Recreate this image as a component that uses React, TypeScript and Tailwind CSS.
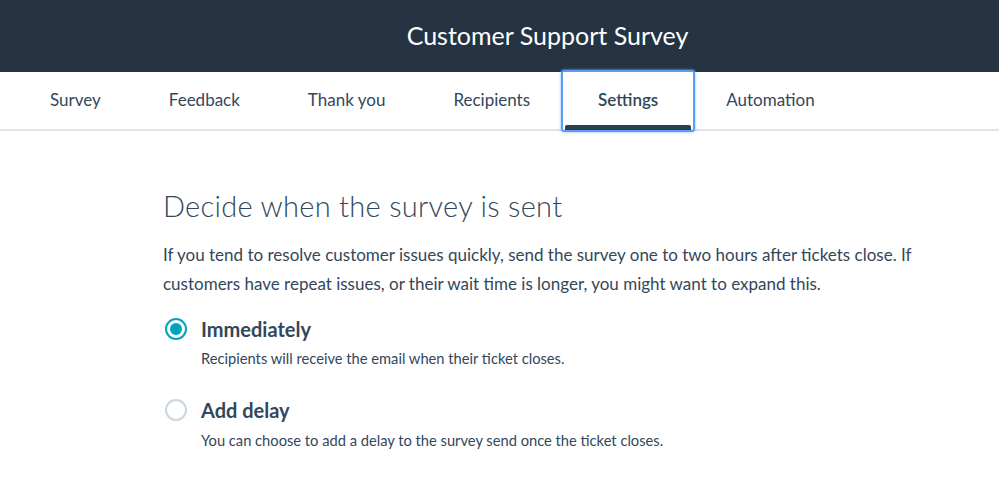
const tabs = ["Survey", "Feedback", "Thank you", "Recipients", "Settings", "Automation"];

function Radio({ checked }: { checked: boolean }) {
  return (
    <span
      className={
        "ml-[2px] mt-[3px] flex h-[22px] w-[22px] shrink-0 items-center justify-center rounded-full border-2 bg-white " +
        (checked ? "border-[#00a4bd]" : "border-[#cbd6e2]")
      }
    >
      {checked && <span className="h-[12px] w-[12px] rounded-full bg-[#00a4bd]" />}
    </span>
  );
}

export default function App() {
  return (
    <div className="h-[479px] w-[999px] overflow-hidden bg-white font-['Lato',sans-serif] text-[#33475b]">
      {/* header */}
      <div className="flex h-[72px] items-center justify-center bg-[#253342] pl-[96px]">
        <h1 className="text-[25px] text-white">Customer Support Survey</h1>
      </div>

      {/* tabs */}
      <div className="flex h-[59px] items-stretch border-b-2 border-[#dfe3eb] pl-[16px]">
        {tabs.map((t) => {
          const active = t === "Settings";
          return (
            <div
              key={t}
              className={
                "relative flex items-center px-[34px] pb-[2px] text-[17px] " +
                (active
                  ? "-mx-[3px] -mb-[3px] -mt-[2px] rounded-[3px] border-2 border-[#5b9bf5] px-[35px] font-semibold shadow-[0_0_3px_#7fb0f7]"
                  : "")
              }
            >
              {t}
              {active && (
                <span className="absolute bottom-0 left-[2px] right-[2px] h-[5px] rounded-t-[2px] bg-[#2d3e50]" />
              )}
            </div>
          );
        })}
      </div>

      {/* content */}
      <div className="pl-[163px] pr-[60px] pt-[56px]">
        <h2 className="text-[29px] font-light leading-[38px] tracking-[0.3px]">Decide when the survey is sent</h2>
        <p className="mt-[15px] text-[17px] leading-[29px]">
          If you tend to resolve customer issues quickly, send the survey one to two hours after tickets close. If
          customers have repeat issues, or their wait time is longer, you might want to expand this.
        </p>

        <div className="mt-[17px] flex gap-[14px]">
          <Radio checked />
          <div>
            <div className="text-[20px] font-bold leading-[28px]">Immediately</div>
            <div className="mt-[5px] text-[14.7px] leading-[20px]">
              Recipients will receive the email when their ticket closes.
            </div>
          </div>
        </div>

        <div className="mt-[28px] flex gap-[14px]">
          <Radio checked={false} />
          <div>
            <div className="text-[20px] font-bold leading-[28px]">Add delay</div>
            <div className="mt-[6px] text-[14.7px] leading-[20px]">
              You can choose to add a delay to the survey send once the ticket closes.
            </div>
          </div>
        </div>
      </div>
    </div>
  );
}
